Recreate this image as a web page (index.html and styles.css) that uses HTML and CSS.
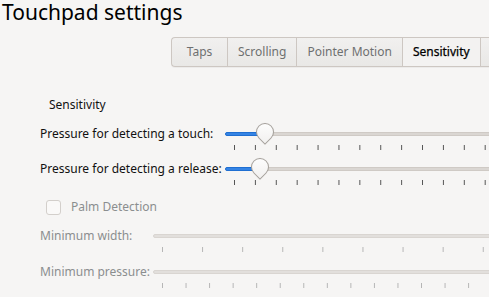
FILE: index.html
```html
<!DOCTYPE html>
<html>
<head>
<meta charset="utf-8">
<link rel="stylesheet" href="styles.css">
</head>
<body>
<div class="window">
  <h1 class="title">Touchpad settings</h1>
  <div class="tabs">
    <div class="tab">Taps</div>
    <div class="tab">Scrolling</div>
    <div class="tab">Pointer Motion</div>
    <div class="tab active">Sensitivity</div>
    <div class="tab more"></div>
  </div>
  <section class="page">
    <div class="group-title">Sensitivity</div>
    <div class="scale-grid wide">
      <div class="label">Pressure for detecting a touch:</div>
      <div class="scale">
        <div class="track"><div class="fill" style="width:40px"></div></div>
        <div class="handle" style="left:40px"></div>
        <div class="ticks t21"></div>
      </div>
      <div class="label">Pressure for detecting a release:</div>
      <div class="scale">
        <div class="track"><div class="fill" style="width:34.5px"></div></div>
        <div class="handle" style="left:34.5px"></div>
        <div class="ticks t21"></div>
      </div>
    </div>
    <label class="check disabled">
      <span class="box"></span>
      <span>Palm Detection</span>
    </label>
    <div class="scale-grid narrow disabled">
      <div class="label">Minimum width:</div>
      <div class="scale">
        <div class="track"></div>
        <div class="ticks t40"></div>
      </div>
      <div class="label">Minimum pressure:</div>
      <div class="scale">
        <div class="track"></div>
        <div class="ticks t23"></div>
      </div>
    </div>
  </section>
</div>
</body>
</html>
```
FILE: styles.css
```css
html, body {
  margin: 0;
  padding: 0;
  background: #f6f5f4;
  overflow: hidden;
}
body {
  font-family: "Noto Sans", "Open Sans", sans-serif;
  color: #2e3436;
  width: 489px;
  height: 297px;
}
.window {
  width: 620px;
}
.title {
  margin: 0;
  padding-left: 2px;
  font-size: 21px;
  line-height: 24px;
  font-weight: normal;
  color: #000;
}
.tabs {
  display: flex;
  margin: 13px 0 0 171px;
  height: 30px;
  box-sizing: border-box;
  border: 1px solid #cdc7c2;
  border-radius: 4px 0 0 4px;
  border-right: none;
  width: max-content;
  background: linear-gradient(#f1f0ef, #e9e8e6);
  box-shadow: 0 1px rgba(0,0,0,0.04);
}
.tab {
  padding: 0 10px;
  min-width: 35px;
  text-align: center;
  font-size: 12px;
  line-height: 28px;
  color: #6e7070;
  border-left: 1px solid #cdc7c2;
}
.tab:first-child {
  border-left: none;
}
.tab.active {
  color: #000;
  background: #f3f2f1;
  -webkit-text-stroke: 0.25px #000;
}
.tab.more {
  width: 40px;
}
.page {
  padding-left: 40px;
}
.group-title {
  margin: 29px 0 0 9px;
  font-size: 12px;
  line-height: 18px;
  color: #111;
}
.scale-grid {
  display: grid;
  grid-auto-rows: 35px;
  margin-top: 11px;
}
.scale-grid.wide {
  grid-template-columns: 185px 1fr;
}
.scale-grid.narrow {
  grid-template-columns: 113px 1fr;
  grid-auto-rows: 36px;
  margin-top: 11px;
}
.label {
  font-size: 12px;
  line-height: 18px;
  color: #111;
  white-space: nowrap;
}
.scale {
  position: relative;
}
.track {
  margin-top: 7px;
  height: 4px;
  box-sizing: border-box;
  border-radius: 3px;
  background: #dad6d2;
  border: 1px solid #cfcac5;
  position: relative;
}
.fill {
  position: absolute;
  left: -1px;
  top: -1px;
  height: 4px;
  border-radius: 3px;
  background: #3584e4;
  border: 1px solid #1f6fd2;
  box-sizing: border-box;
}
.handle {
  position: absolute;
  top: 0px;
  width: 18px;
  height: 18px;
  margin-left: -9px;
  margin-top: -1.7px;
  box-sizing: border-box;
  border: 1px solid #a39e99;
  border-radius: 50% 50% 0 50%;
  transform: rotate(45deg);
  background: linear-gradient(135deg, #ffffff, #f1f0ef);
  box-shadow: 0 0 1px rgba(0,0,0,0.1);
}
.ticks {
  margin-top: 9px;
  height: 5px;
  background-repeat: repeat-x;
}
.ticks.t21 {
  background-image: linear-gradient(to right, #555 0 1px, transparent 1px);
  background-size: 20.9px 5px;
  background-position: 9px 0;
}
.ticks.t40 {
  background-image: linear-gradient(to right, #b5b5b5 0 1px, transparent 1px);
  background-size: 40.1px 5px;
  background-position: 9px 0;
}
.ticks.t23 {
  background-image: linear-gradient(to right, #b5b5b5 0 1px, transparent 1px);
  background-size: 23.55px 5px;
  background-position: 9px 0;
}
.disabled .label {
  color: #8b8e8f;
}
.disabled .track {
  background: #e2dfdc;
  border-color: #d9d5d1;
}
.check {
  display: flex;
  align-items: center;
  margin-top: 3px;
  margin-left: 6px;
  height: 18px;
  font-size: 12px;
  line-height: 18px;
  gap: 10px;
}
.check.disabled {
  color: #8b8e8f;
}
.box {
  width: 15px;
  height: 15px;
  box-sizing: border-box;
  border: 1px solid #d3cfcb;
  border-radius: 3px;
  background: #faf9f8;
}
```
